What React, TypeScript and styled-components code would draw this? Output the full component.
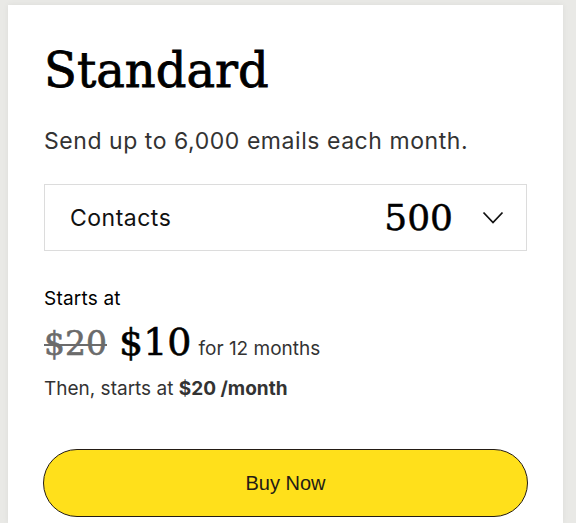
import * as React from 'react';
import styled, { createGlobalStyle } from 'styled-components';

const serif = "'DejaVu Serif', 'Liberation Serif', serif";
const sans = "Inter, 'Liberation Sans', Arial, sans-serif";

const GlobalStyle = createGlobalStyle`
  html, body {
    margin: 0;
    padding: 0;
    background: #e9e9e6;
  }
  body {
    font-family: ${sans};
    overflow: hidden;
  }
`;

const Page = styled.div`
  padding: 5px 13px 0 8px;
  height: 523px;
  box-sizing: border-box;
`;

const Card = styled.div`
  background: #fff;
  height: 100%;
  padding: 40px 36px 0 36px;
  box-sizing: border-box;
  box-shadow: 0 0 6px rgba(0, 0, 0, 0.06);
  display: flex;
  flex-direction: column;
`;

const Title = styled.h1`
  margin: 0;
  font-family: ${serif};
  font-weight: 400;
  font-size: 48px;
  line-height: 50px;
  color: #000;
  -webkit-text-stroke: 0.8px #000;
`;

const Subtitle = styled.p`
  margin: 31px 0 0;
  font-size: 23px;
  line-height: 30px;
  color: #333;
  letter-spacing: 0.55px;
`;

const Select = styled.div`
  margin-top: 28px;
  height: 67px;
  border: 1px solid #dcdcdc;
  box-sizing: border-box;
  display: flex;
  align-items: center;
  padding: 0 22px 0 25px;
`;

const SelectLabel = styled.span`
  flex: 1;
  font-size: 23px;
  color: #111;
  letter-spacing: 0.5px;
`;

const SelectValue = styled.span`
  font-family: ${serif};
  font-size: 36px;
  color: #000;
  margin-right: 29px;
  -webkit-text-stroke: 0.5px #000;
`;

const Chevron = styled.svg`
  width: 22px;
  height: 14px;
`;

const Small = styled.div`
  margin-top: 38px;
  font-size: 19px;
  line-height: 20px;
  color: #000;
  letter-spacing: 0.2px;
`;

const PriceRow = styled.div`
  display: flex;
  align-items: baseline;
  margin-top: 7px;
`;

const Price = styled.span<{ $old?: boolean }>`
  font-family: ${serif};
  font-size: ${p => (p.$old ? '33px' : '38px')};
  line-height: 52px;
  color: ${p => (p.$old ? '#6b6b6b' : '#000')};
  text-decoration: ${p => (p.$old ? 'line-through' : 'none')};
  text-decoration-thickness: 2px;
  margin-right: ${p => (p.$old ? '12px' : '7px')};
  -webkit-text-stroke: 0.6px ${p => (p.$old ? '#6b6b6b' : '#000')};
`;

const Term = styled.span`
  font-size: 19px;
  color: #333;
`;

const Then = styled.div`
  margin-top: 8px;
  font-size: 19px;
  line-height: 22px;
  color: #333;

  b {
    font-weight: 700;
  }
`;

const BuyButton = styled.button`
  margin: 49px -1px 0;
  height: 68px;
  border-radius: 34px;
  border: 1.5px solid #241c15;
  background: #ffe01b;
  color: #241c15;
  font-family: 'Liberation Sans', Arial, sans-serif;
  font-size: 20px;
  cursor: pointer;
`;

export default function App() {
  return (
    <>
      <GlobalStyle />
      <Page>
        <Card>
          <Title>Standard</Title>
          <Subtitle>Send up to 6,000 emails each month.</Subtitle>
          <Select>
            <SelectLabel>Contacts</SelectLabel>
            <SelectValue>500</SelectValue>
            <Chevron viewBox="0 0 22 14" fill="none">
              <path d="M1.5 1.5 L11 11.5 L20.5 1.5" stroke="#111" strokeWidth="1.8" />
            </Chevron>
          </Select>
          <Small>Starts at</Small>
          <PriceRow>
            <Price $old>$20</Price>
            <Price>$10</Price>
            <Term>for 12 months</Term>
          </PriceRow>
          <Then>
            Then, starts at <b>$20 /month</b>
          </Then>
          <BuyButton>Buy Now</BuyButton>
        </Card>
      </Page>
    </>
  );
}
